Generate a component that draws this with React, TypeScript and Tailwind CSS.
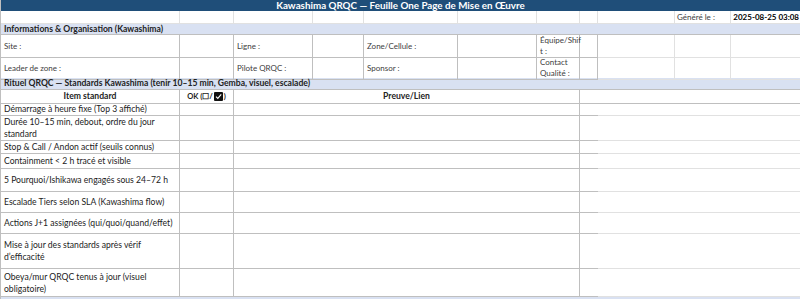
const COLS = "grid grid-cols-[179px_54px_79px_51px_94px_79px_43px_18px_77px_56px_70px]"

const ITEMS: { label: string; h: string }[] = [
  { label: "Démarrage à heure fixe (Top 3 affiché)", h: "h-[13px]" },
  { label: "Durée 10–15 min, debout, ordre du jour standard", h: "h-[24px]" },
  { label: "Stop & Call / Andon actif (seuils connus)", h: "h-[14px]" },
  { label: "Containment < 2 h tracé et visible", h: "h-[15px]" },
  { label: "5 Pourquoi/Ishikawa engagés sous 24–72 h", h: "h-[23px]" },
  { label: "Escalade Tiers selon SLA (Kawashima flow)", h: "h-[21px]" },
  { label: "Actions J+1 assignées (qui/quoi/quand/effet)", h: "h-[21px]" },
  { label: "Mise à jour des standards après vérif d’efficacité", h: "h-[35px]" },
  { label: "Obeya/mur QRQC tenus à jour (visuel obligatoire)", h: "h-[28px]" },
]

const dark = "border-r border-b border-[#bfbfbf]"
const light = "border-r border-b border-[#e1e1e1]"

function InfoRow({ h, cells }: { h: string; cells: React.ReactNode[] }) {
  return (
    <div className={`${COLS} ${h}`}>
      {cells.map((c, i) => (
        <div key={i} className={`${dark} flex items-center px-[3px] text-[8px] leading-[11px] text-[#404040]`}>
          {c}
        </div>
      ))}
      <div className={light} />
      <div className={light} />
      <div className="border-b border-[#e1e1e1]" />
    </div>
  )
}

function CheckedBox() {
  return (
    <svg width="9" height="9" viewBox="0 0 9 9" className="mx-[1px] inline-block align-[-1px]">
      <rect width="9" height="9" rx="1" fill="#111" />
      <path d="M2 4.6 L3.8 6.4 L7.2 2.4" stroke="#fff" strokeWidth="1.1" fill="none" />
    </svg>
  )
}

export default function App() {
  return (
    <div className="h-[299px] w-[800px] overflow-hidden border-l border-[#bfbfbf] bg-white font-['Lato',sans-serif] text-[8.6px] text-[#222]">
      {/* Title */}
      <div className="flex h-[11px] items-center justify-center overflow-visible bg-[#1f4e79] text-[9.8px] leading-none font-bold text-white">
        Kawashima QRQC — Feuille One Page de Mise en Œuvre
      </div>

      {/* Generated */}
      <div className={`${COLS} h-[13px]`}>
        {Array.from({ length: 9 }).map((_, i) => (
          <div key={i} className={light} />
        ))}
        <div className={`${light} flex items-center px-[2px] text-[8px] text-[#404040]`}>Généré le :</div>
        <div className="flex items-center justify-end border-b border-[#e1e1e1] pr-[2px] text-[8px] font-bold whitespace-nowrap text-black">
          2025-08-25 03:08
        </div>
      </div>

      {/* Section: infos */}
      <div className="flex h-[11px] items-center border-b border-[#bfbfbf] bg-[#d9e1f2] px-[3px] font-bold">
        Informations & Organisation (Kawashima)
      </div>
      <InfoRow
        h="h-[22px]"
        cells={["Site :", "", "Ligne :", "", "Zone/Cellule :", "", <span>Équipe/Shif<br />t :</span>, ""]}
      />
      <InfoRow
        h="h-[21px]"
        cells={["Leader de zone :", "", "Pilote QRQC :", "", "Sponsor :", "", <span>Contact<br />Qualité :</span>, ""]}
      />

      {/* Section: rituel */}
      <div className="flex h-[12px] items-center border-b border-[#bfbfbf] bg-[#d9e1f2] px-[3px] font-bold">
        Rituel QRQC — Standards Kawashima (tenir 10–15 min, Gemba, visuel, escalade)
      </div>

      {/* Table header */}
      <div className={`${COLS} h-[13px] font-bold`}>
        <div className={`${dark} flex items-center justify-center`}>Item standard</div>
        <div className={`${dark} flex items-center justify-center text-[7.5px]`}>
          OK (☐/<CheckedBox />)
        </div>
        <div className={`${dark} col-span-5 flex items-center justify-center`}>Preuve/Lien</div>
        <div className="col-span-4 border-b border-[#bfbfbf]" />
      </div>

      {ITEMS.map((item) => (
        <div key={item.label} className={`${COLS} ${item.h}`}>
          <div className={`${dark} flex items-center pr-[6px] pl-[3px] leading-[12px]`}>{item.label}</div>
          <div className={dark} />
          <div className={`${dark} col-span-5`} />
          <div className="border-b border-[#bfbfbf]" />
          <div className="col-span-3 border-b border-[#e1e1e1]" />
        </div>
      ))}

      <div className="h-[4px] bg-[#d9e1f2]" />
    </div>
  )
}
